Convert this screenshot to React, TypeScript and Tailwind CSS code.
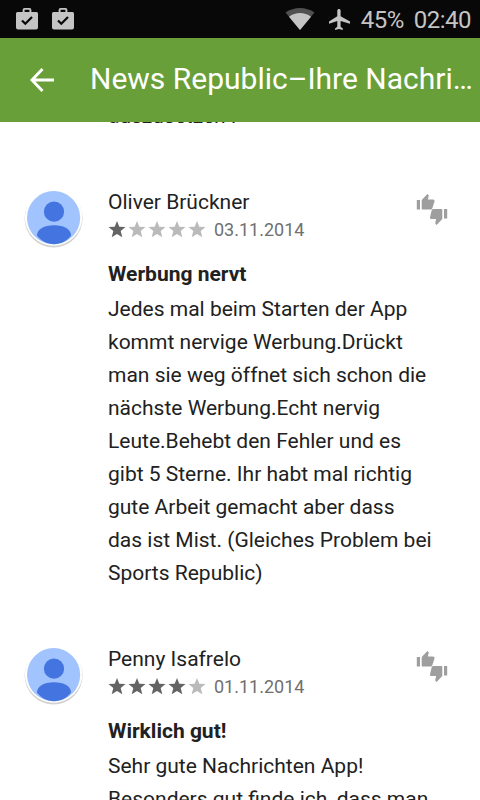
import clsx from 'clsx'

type Review = {
  author: string
  date: string
  rating: number
  title: string
  lines: string[]
}

const reviews: Review[] = [
  {
    author: 'Oliver Brückner',
    date: '03.11.2014',
    rating: 1,
    title: 'Werbung nervt',
    lines: [
      'Jedes mal beim Starten der App',
      'kommt nervige Werbung.Drückt',
      'man sie weg öffnet sich schon die',
      'nächste Werbung.Echt nervig',
      'Leute.Behebt den Fehler und es',
      'gibt 5 Sterne. Ihr habt mal richtig',
      'gute Arbeit gemacht aber dass',
      'das ist Mist. (Gleiches Problem bei',
      'Sports Republic)',
    ],
  },
  {
    author: 'Penny Isafrelo',
    date: '01.11.2014',
    rating: 4,
    title: 'Wirklich gut!',
    lines: ['Sehr gute Nachrichten App!', 'Besonders gut finde ich, dass man'],
  },
]

function ShopIcon() {
  return (
    <svg viewBox="0 0 24 24" className="h-6 w-6">
      <path
        fill="#c4c4c4"
        fillRule="evenodd"
        d="M9.600 1h4.800a2 2 0 0 1 2 2v2h5.100a1.500 1.500 0 0 1 1.500 1.500V20.500a2 2 0 0 1-2 2H3a2 2 0 0 1-2-2V6.500A1.500 1.500 0 0 1 2.500 5h5.100V3a2 2 0 0 1 2-2zm0 1.800V5h4.800V2.800z"
      />
      <path d="M7 13.500l3.300 3.300L17 10" fill="none" stroke="#080808" strokeWidth="2.200" />
    </svg>
  )
}

function StatusBar() {
  return (
    <div className="flex h-[38px] items-center justify-between bg-[#080808] pr-[9px] pl-[15px] text-[24px] text-[#c4c4c4]">
      <div className="flex gap-3">
        <ShopIcon />
        <ShopIcon />
      </div>
      <div className="flex items-center">
        <svg viewBox="0 0 30 24" className="mr-[14px] h-6 w-[30px]">
          <path fill="#505050" d="M.5 5.500C9-.6 21-.6 29.500 5.500L15 23z" />
          <path fill="#c4c4c4" d="M4 9.700C10.500 4.900 19.500 4.900 26 9.700L15 23z" />
        </svg>
        <svg viewBox="2.500 2 19 20" className="mr-[11px] h-[21px] w-[21px]" preserveAspectRatio="none">
          <path
            fill="#c4c4c4"
            d="M21.500 16v-2l-8.500-5V3.500c0-.83-.67-1.500-1.500-1.500S10 2.670 10 3.500V9l-7.500 5v2l7.500-2.500V19l-2 1.500V22l3.500-1 3.500 1v-1.500L13 19v-5.500l8.500 2.500z"
          />
        </svg>
        <span className="mr-2.5 pt-px tracking-[-0.5px]">45%</span>
        <span className="pt-px tracking-[-0.5px]">02:40</span>
      </div>
    </div>
  )
}

function AppBar() {
  return (
    <header className="relative z-10 flex h-[84px] items-center bg-[#689f38] pl-[29px] text-white">
      <svg viewBox="0 0 26 26" className="mr-[35px] h-[26px] w-[26px] shrink-0">
        <path d="M25 13H3.500M13.500 2L3 13l10.500 11" fill="none" stroke="currentColor" strokeWidth="2.900" />
      </svg>
      <h1 className="pb-1 text-[30px] whitespace-nowrap">News Republic–Ihre Nachri…</h1>
    </header>
  )
}

function Avatar() {
  return (
    <svg viewBox="0 0 60 60" className="h-[60px] w-[60px]">
      <circle cx="29.600" cy="28.400" r="29" fill="#d2d2d2" />
      <circle cx="29.600" cy="27" r="28.700" fill="#fff" />
      <circle cx="29.600" cy="27.700" r="26.600" fill="#a1c4ff" />
      <circle cx="30" cy="21.700" r="10.100" fill="#4374e0" />
      <path d="M13 45.500c0-6.500 7-10.300 17-10.300s17 3.800 17 10.300c-4 5.500-10.500 8.700-17 8.700s-13-3.200-17-8.700z" fill="#4374e0" />
    </svg>
  )
}

function Stars({ rating }: { rating: number }) {
  return (
    <div className="flex">
      {[1, 2, 3, 4, 5].map((n) => (
        <svg
          key={n}
          viewBox="0 0 20 20"
          className={clsx('h-5 w-5', n <= rating ? 'text-[#646464]' : 'text-[#bababa]')}
        >
          <path
            fill="currentColor"
            d="M9 2l2.300 5.700 6.200.4-4.800 4 1.600 6.100L9 14.900l-5.300 3.300 1.600-6.100L.5 8.100l6.200-.4z"
          />
        </svg>
      ))}
    </div>
  )
}

function RateIcon() {
  return (
    <svg viewBox="0 0 32 32" className="h-8 w-8" fill="#9e9e9e">
      <path d="M.8 7h3.200v9.500H.8zM5.700 15.500V7.600c0-.5.200-.9.500-1.200L11.400 1l1 1c.3.300.4.700.3 1.100L11.900 6.600H17c1.100 0 1.700.8 1.500 1.800l-2.200 6.900c-.3.800-.9 1.200-1.700 1.200H6.700c-.6 0-1-.4-1-1z" />
      <path d="M31.200 25.500H28V16h3.200zM26.300 17v8.400c0 .5-.2.900-.5 1.200L20.600 32l-1-1c-.3-.3-.4-.7-.3-1.100l.8-3.900H15.500c-1.100 0-1.700-.8-1.500-1.800l1.700-7c.3-.8.900-1.200 1.700-1.200h7.900c.6 0 1 .4 1 1z" />
    </svg>
  )
}

function ReviewItem({ review }: { review: Review }) {
  return (
    <article className="mb-[55px] flex">
      <div className="w-[108px] shrink-0 pt-0.5 pl-6">
        <Avatar />
      </div>
      <div className="min-w-0 flex-1">
        <div className="flex justify-between pr-8">
          <div>
            <h2 className="text-[21px] leading-7">{review.author}</h2>
            <div className="flex h-[26px] items-center gap-1.5">
              <Stars rating={review.rating} />
              <span className="text-[18px] text-[#707070]">{review.date}</span>
            </div>
          </div>
          <div className="pt-[5px]">
            <RateIcon />
          </div>
        </div>
        <h3 className="mt-4 mb-0.5 text-[21px] leading-[33px] font-bold">{review.title}</h3>
        {review.lines.map((line) => (
          <p key={line} className="text-[21px] leading-[33px] whitespace-nowrap">
            {line}
          </p>
        ))}
      </div>
    </article>
  )
}

export default function App() {
  return (
    <div className="flex h-[800px] w-[480px] flex-col overflow-hidden bg-white font-['Roboto',sans-serif] text-[#212121]">
      <StatusBar />
      <AppBar />
      <main className="min-h-0 flex-1 overflow-hidden">
        <p className="-mt-[22px] mb-[55px] pl-[108px] text-[21px] leading-[33px]">auszusetzen !</p>
        {reviews.map((review) => (
          <ReviewItem key={review.author} review={review} />
        ))}
      </main>
    </div>
  )
}
